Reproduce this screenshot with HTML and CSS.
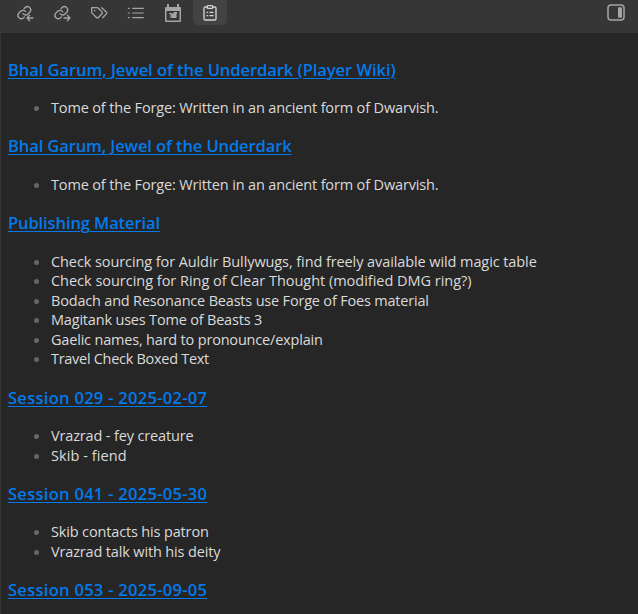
FILE: index.html
```html
<!DOCTYPE html>
<html lang="en">
<head>
<meta charset="utf-8">
<title>Notes</title>
<link rel="stylesheet" href="styles.css">
</head>
<body>
<header class="tabs">
  <button class="tab" aria-label="Backlinks"><svg class="icon link" viewBox="0 0 24 24"><path d="M9 13a5 5 0 0 0 7.500.5l3-3a5 5 0 0 0-7-7l-2 2"/><path d="M13 10a5 5 0 0 0-7.500-.5l-3 3a5 5 0 0 0 7 7l1.500-1.500"/><path d="M24 19.500h-8.500m3.500-4-4 4 4 4"/></svg></button>
  <button class="tab" aria-label="Outgoing links"><svg class="icon link" viewBox="0 0 24 24"><path d="M9 13a5 5 0 0 0 7.500.5l3-3a5 5 0 0 0-7-7l-2 2"/><path d="M13 10a5 5 0 0 0-7.500-.5l-3 3a5 5 0 0 0 7 7l1.500-1.500"/><path d="M15 19.500h8.500m-3.500-4 4 4-4 4"/></svg></button>
  <button class="tab" aria-label="Tags"><svg class="icon" viewBox="0 0 24 24"><path d="M1 4h8.200c.7 0 1.300.3 1.800.8l5.500 5.500a2 2 0 0 1 0 2.800l-5.600 5.600a2 2 0 0 1-2.800 0l-6.500-6.500A2 2 0 0 1 1 10.500z"/><path d="m16 4 7 6.500a2 2 0 0 1 0 2.800L17.500 19"/><circle class="solid" cx="5.500" cy="8.500" r="1.200"/></svg></button>
  <button class="tab" aria-label="Outline"><svg class="icon thin" viewBox="0 0 24 24"><path d="M7 5H23M7 12H23M7 19H23M.5 5h1.500M.5 12h1.500M.5 19h1.500"/></svg></button>
  <button class="tab" aria-label="Calendar"><svg class="icon calendar" viewBox="0 0 16 18"><path class="solid" fill-rule="evenodd" d="M1 3h1V0h2v3h8V0h2v3h1q1 0 1 1v13q0 1-1 1H1q-1 0-1-1V4q0-1 1-1zM1.500 7v9.500h13V7z"/><path class="solid" d="M4 9h3l1 1 1-2h3v2l-1 1 1 1-1 2H7l-3-1 3-1-3-1 3-1-3 0z"/></svg></button>
  <button class="tab active" aria-label="Notes"><svg class="icon" viewBox="0 0 24 24"><path d="M8 3H5a2 2 0 0 0-2 2v15.500a2 2 0 0 0 2 2h14a2 2 0 0 0 2-2V5a2 2 0 0 0-2-2h-3"/><rect x="8" y="1" width="8" height="4" rx="1"/><path d="M12 11h4.500M12 16h4.500M7.500 11h1M7.500 16h1"/></svg></button>
  <button class="toggle" aria-label="Toggle sidebar"><svg viewBox="0 0 18 17"><rect x="1" y="1" width="16" height="15" rx="3"/><rect class="pane" x="11" y="3.300" width="4" height="10.400" rx=".8"/></svg></button>
</header>
<main class="notes">
  <h2 class="wide"><a href="#">Bhal Garum, Jewel of the Underdark (Player Wiki)</a></h2>
  <ul><li class="t3">Tome of the Forge: Written in an ancient form of Dwarvish.</li></ul>
  <h2><a href="#">Bhal Garum, Jewel of the Underdark</a></h2>
  <ul><li class="t3">Tome of the Forge: Written in an ancient form of Dwarvish.</li></ul>
  <h2><a href="#">Publishing Material</a></h2>
  <ul>
    <li class="t4">Check sourcing for Auldir Bullywugs, find freely available wild magic table</li>
    <li class="t5">Check sourcing for Ring of Clear Thought (modified DMG ring?)</li>
    <li class="t2">Bodach and Resonance Beasts use Forge of Foes material</li>
    <li class="t2">Magitank uses Tome of Beasts 3</li>
    <li class="t2">Gaelic names, hard to pronounce/explain</li>
    <li class="t1">Travel Check Boxed Text</li>
  </ul>
  <h2 class="session"><a href="#">Session 029 - 2025-02-07</a></h2>
  <ul><li class="t3">Vrazrad - fey creature</li><li class="t6">Skib - fiend</li></ul>
  <h2 class="session"><a href="#">Session 041 - 2025-05-30</a></h2>
  <ul><li class="t3">Skib contacts his patron</li><li class="t3">Vrazrad talk with his deity</li></ul>
  <h2 class="session"><a href="#">Session 053 - 2025-09-05</a></h2>
</main>
</body>
</html>
```

FILE: styles.css
```css
* { box-sizing: border-box; }
html, body { height: 100%; }
body {
  margin: 0;
  overflow: hidden;
  display: flex;
  flex-direction: column;
  background: #262626;
  color: #dadada;
  font-family: "Segoe UI", "Open Sans", "Noto Sans", sans-serif;
  font-size: 14.5px;
  line-height: 19.5px;
}
.tabs {
  flex: none;
  display: flex;
  align-items: flex-start;
  gap: 3px;
  height: 33px;
  padding: 0 13px 0 8px;
  background: #363636;
}
.tab, .toggle {
  display: flex;
  align-items: center;
  justify-content: center;
  padding: 0;
  border: 0;
  background: none;
  color: #a5a5a5;
}
.tab { width: 34px; height: 25px; border-radius: 0 0 5px 5px; }
.tab.active { background: #434343; color: #d4d4d4; }
.toggle { margin: 4px 0 0 auto; width: 18px; height: 17px; }
svg { fill: none; stroke: currentColor; stroke-linecap: round; stroke-linejoin: round; overflow: visible; }
.icon { width: 16px; height: 16px; stroke-width: 2; margin-top: 1px; }
.link { margin-right: 1px; }
.calendar { height: 18px; }
.thin { stroke-width: 1.7; }
.solid { fill: currentColor; stroke: none; }
.toggle svg { width: 18px; height: 17px; stroke-width: 1.5; }
.pane { fill: currentColor; stroke: none; }
.notes {
  flex: 1;
  min-height: 0;
  overflow: hidden;
  border-left: 1px solid #363636;
  padding: 25.5px 7px 0;
}
h2 {
  margin: 0 0 17.1px;
  font-size: 16.5px;
  line-height: 22.4px;
  font-weight: 600;
  letter-spacing: -0.1px;
}
h2.wide { letter-spacing: -0.05px; }
h2.session { letter-spacing: 0.29px; }
a { color: #027aea; text-decoration: underline; text-decoration-thickness: 1px; text-underline-offset: 2px; text-decoration-skip-ink: auto; }
ul { list-style: none; margin: 0 0 17.85px; padding: 0 0 0 43px; }
li { position: relative; white-space: nowrap; }
.t1 { letter-spacing: -0.29px; }
.t2 { letter-spacing: -0.19px; }
.t3 { letter-spacing: -0.15px; }
.t4 { letter-spacing: -0.09px; }
.t5 { letter-spacing: -0.02px; }
.t6 { letter-spacing: 0.08px; }
li::before {
  content: "";
  position: absolute;
  left: -17px;
  top: 8px;
  width: 5px;
  height: 5px;
  border-radius: 50%;
  background: #666;
}
```
